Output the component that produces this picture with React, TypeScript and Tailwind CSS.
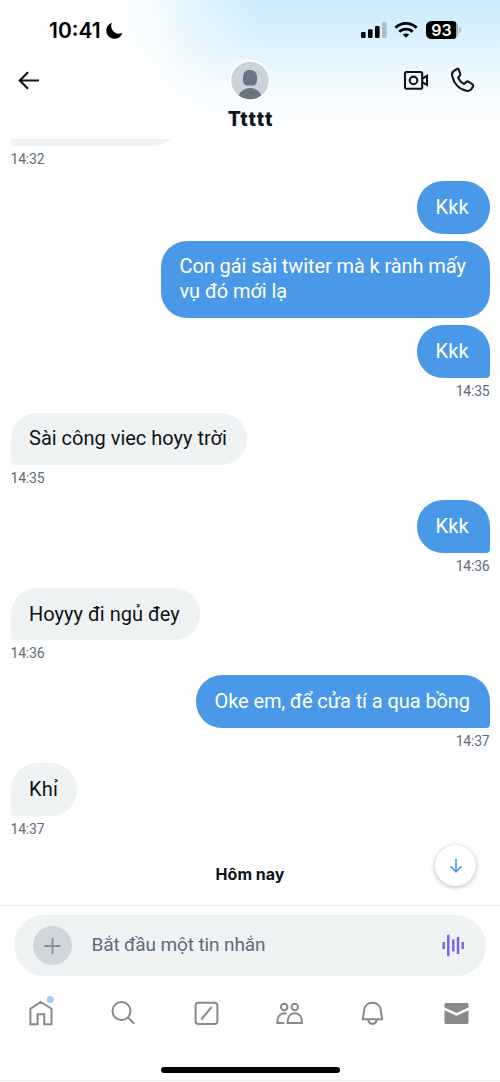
type Message = {
  side: "in" | "out";
  text: string;
  box: string;
  tail?: boolean;
  time?: string;
};

const messages: Message[] = [
  { side: "out", text: "Kkk", box: "w-[73px] tracking-[0.2px]" },
  { side: "out", text: "Con gái sài twiter mà k rành mấy\nvụ đó mới lạ", box: "w-[329px] tracking-[-0.09px]" },
  { side: "out", text: "Kkk", box: "w-[73px] tracking-[0.2px]", tail: true, time: "14:35" },
  { side: "in", text: "Sài công viec hoyy trời", box: "w-[236px]", tail: true, time: "14:35" },
  { side: "out", text: "Kkk", box: "w-[73px] tracking-[0.2px]", tail: true, time: "14:36" },
  { side: "in", text: "Hoyyy đi ngủ đey", box: "w-[189.5px]", tail: true, time: "14:36" },
  { side: "out", text: "Oke em, để cửa tí a qua bồng", box: "w-[294px] tracking-[-0.09px]", tail: true, time: "14:37" },
  { side: "in", text: "Khỉ", box: "w-[66.5px] tracking-[0.2px]", tail: true, time: "14:37" },
];

function StatusBar() {
  return (
    <div className="flex h-[60px] items-center pl-[49px] pr-[39.5px]">
      <span className="w-[52px] font-['Inter'] text-[21px] font-semibold leading-none tracking-[0px] text-black">10:41</span>
      <svg className="ml-[5px]" width="17" height="17" viewBox="0 0 17 17">
        <path d="M6 0.8A8.2 8.2 0 1 0 16.4 10.8A7.6 7.6 0 0 1 6 0.8Z" fill="#000" />
      </svg>
      <div className="ml-auto flex items-center">
        <svg width="27" height="18" viewBox="0 0 27 18">
          <rect x="1" y="11" width="4.6" height="6" rx="1.2" />
          <rect x="8" y="8.3" width="4.6" height="8.7" rx="1.2" />
          <rect x="15" y="5" width="4.6" height="12" rx="1.2" />
          <rect x="22" y="1" width="4.6" height="16" rx="1.2" fill="#a9bfd1" />
        </svg>
        <svg className="ml-[7px]" width="24" height="18" viewBox="0 0 24 18" fill="none" stroke="#000" strokeWidth="2.9">
          <path d="M1.4 6.8C7.4 .9 16.6 .9 22.6 6.8" />
          <path d="M5.3 10.8C9 7.2 15 7.2 18.7 10.8" />
          <path d="M12 16.8L8.8 13.6C10.6 12 13.4 12 15.2 13.6Z" fill="#000" stroke="none" />
        </svg>
        <div className="ml-[8px] flex h-[18px] w-[32px] items-center justify-center rounded-[5.5px] bg-gradient-to-r from-black from-93% to-[#93a9ba] to-93% font-['Inter'] text-[16px] font-semibold leading-none text-white">
          93
        </div>
        <div className="ml-[1px] h-[6px] w-[2px] rounded-r-full bg-[#a9bfd1]" />
      </div>
    </div>
  );
}

function Header() {
  return (
    <header className="h-[139px] bg-[linear-gradient(to_right,#fefefe_0%,#fefefe_20%,rgba(254,254,254,0.85)_31%,rgba(254,254,254,0.35)_41%,rgba(254,254,254,0)_52%),linear-gradient(to_bottom,#cdecfe_0px,#d7f0fe_35px,#ebf7fe_68px,#f8fcff_100px,#fefefe_139px)]">
      <StatusBar />
      <div className="grid grid-cols-[1fr_60px_1fr] items-start">
        <svg className="ml-[17px] mt-[9px]" width="24" height="24" viewBox="0 0 24 24" fill="none" stroke="#0f1419" strokeWidth="2.2">
          <path d="M22 11.5H3M11 3.2L2.8 11.5L11 19.8" />
        </svg>
        <div className="flex flex-col items-center">
          <svg className="overflow-visible" width="40" height="40" viewBox="0 0 40 40">
            <circle cx="20" cy="20.5" r="20.5" fill="#fff" />
            <circle cx="20" cy="20.5" r="18.8" fill="#cbd3da" />
            <path d="M20 10C15.8 10 13 12.6 13 17V20C13 23.8 15.2 25.6 17.6 25.6H22.4C24.8 25.6 27 23.8 27 20V17C27 12.6 24.2 10 20 10Z" fill="#687684" />
            <path d="M8.7 35.4C10.5 30.9 15 28 20 28S29.5 30.9 31.3 35.4A18.8 18.8 0 0 1 8.7 35.4Z" fill="#687684" />
          </svg>
          <span className="mt-[8px] pl-[1.5px] font-['Inter'] text-[19.5px] font-extrabold leading-[22px] tracking-[1.5px] text-[#0f1419]">Ttttt</span>
        </div>
        <div className="flex items-center justify-end pr-[25px] pt-[7px]">
          <svg width="26" height="26" viewBox="0 0 26 26" fill="none" stroke="#0f1419" strokeWidth="2.1">
            <rect x="2" y="5" width="17.2" height="16.8" rx="1.5" />
            <circle cx="10.5" cy="13.4" r="3.8" />
            <path d="M19.5 11.5L24 8.8V18L19.5 15.3" />
          </svg>
          <svg className="ml-[20px]" width="26" height="26" viewBox="0 0 26 26" fill="none" stroke="#0f1419" strokeWidth="2.1" strokeLinejoin="round">
            <path d="M8 1.9L4.4 4.3C3.2 5.2 2.8 7 3.2 9C4.8 16.4 10 22.4 17.5 23.8C19.5 24.2 21.5 23.8 22.6 21.8L24 19.4C24.4 18.6 24.2 17.9 23.5 17.4L19.4 14.7C18.7 14.3 18 14.4 17.4 14.9L15 17C12.3 15.6 10.3 13.4 9.2 10.9L11 8.2C11.4 7.6 11.4 7 11.1 6.4L9.8 2.6C9.5 1.8 8.7 1.5 8 1.9Z" />
          </svg>
        </div>
      </div>
    </header>
  );
}

function Bubble({ message }: { message: Message }) {
  const out = message.side === "out";
  return (
    <div className={out ? "flex flex-col items-end" : "flex flex-col items-start"}>
      <div
        className={[
          "rounded-[26px] py-[13.75px] whitespace-pre text-[20px] leading-[25px]",
          message.box,
          out ? "bg-[#4a99e9] pl-[19px] text-white" : "bg-[#eef2f3] pl-[18.5px] text-[#0f1419]",
          message.tail ? (out ? "rounded-br-[4px]" : "rounded-bl-[4px]") : "mb-[7px]",
        ].join(" ")}
      >
        {message.text}
      </div>
      {message.time && <Time value={message.time} />}
    </div>
  );
}

function Time({ value }: { value: string }) {
  return <div className="mb-[9px] h-[26.1px] text-[14px] leading-[26px] tracking-[-0.2px] text-[#5f6c7b]">{value}</div>;
}

function Composer() {
  return (
    <div className="border-t border-[#e8eaeb] px-[14px] pt-[9px]">
      <div className="flex h-[61px] items-center rounded-full bg-[#eef2f3] pl-[19px] pr-[21px]">
        <div className="flex size-[39px] items-center justify-center rounded-full bg-[#cfd6dc]">
          <svg width="18" height="18" viewBox="0 0 18 18" stroke="#8b8f93" strokeWidth="1.8">
            <path d="M8.5 1V17M0.5 9H16.5" />
          </svg>
        </div>
        <span className="ml-[19.5px] text-[19px] tracking-[-0.12px] text-[#5f6c7b]">Bắt đầu một tin nhắn</span>
        <svg className="ml-auto" width="24" height="24" viewBox="0 0 24 24" stroke="#7a5cf5" strokeWidth="2.4">
          <path d="M2.7 8V15M7.3 0.8V22.2M12.3 5.5V17.5M17 3V20M21.7 8V15" />
        </svg>
      </div>
    </div>
  );
}

const tabs = [
  <>
    <path d="M13.8 3L24.5 9.7V25.2H17.2V15.2H10.6V25.2H3.4V9.7Z" />
    <circle cx="23.2" cy="0.5" r="3.5" fill="#9ccaf3" stroke="none" />
  </>,
  <>
    <circle cx="11.5" cy="12" r="9" />
    <path d="M18.2 18.7L24.2 24.7" />
  </>,
  <>
    <rect x="2.6" y="3.8" width="21.8" height="21.2" rx="3" />
    <path d="M8.3 20.5L18.7 7.8" />
  </>,
  <>
    <circle cx="8.2" cy="8" r="3.2" />
    <circle cx="18.8" cy="8" r="3.2" />
    <path d="M11.5 24C11.5 18 14.4 14.3 18.8 14.3S26.1 18 26.1 24Z" />
    <path d="M8.3 24H1.2C1.2 18 4.1 14.3 8.5 14.3C9.3 14.3 10 14.4 10.7 14.6" />
  </>,
  <>
    <path d="M3.8 20.3H23.2L21.8 11.5C21.4 6.6 18 3.7 13.5 3.7S5.6 6.6 5.1 11.5Z" />
    <path d="M9.2 20.8C9.8 23.6 11.4 24.9 13.5 24.9S17.2 23.6 17.8 20.8" />
  </>,
  <g fill="#87898b" stroke="none">
    <path d="M4 4H25C25.8 4 26.5 4.7 26.5 5.5V8.4L14.5 13.9L2.5 8.4V5.5C2.5 4.7 3.2 4 4 4Z" />
    <path d="M2.5 11.2L14.5 16.8L26.5 11.2V23.5C26.5 24.4 25.8 25 25 25H4C3.2 25 2.5 24.4 2.5 23.5Z" />
  </g>,
];

function TabBar() {
  return (
    <nav className="flex h-[105px] flex-col border-b border-[#f3f3f3] pt-[23px]">
      <div className="-ml-px flex">
        {tabs.map((icon, i) => (
          <div key={i} className="flex w-[83px] justify-center">
            <svg className="overflow-visible" width="28" height="28" viewBox="0 0 28 28" fill="none" stroke="#87898b" strokeWidth="2">
              {icon}
            </svg>
          </div>
        ))}
      </div>
      <div className="mx-auto mt-[40px] h-[6px] w-[179px] rounded-full bg-black" />
    </nav>
  );
}

export default function App() {
  return (
    <div className="flex h-[1082px] w-[500px] flex-col overflow-hidden bg-[#fefefe] font-['Roboto',sans-serif]">
      <Header />
      <main className="relative h-[766px] overflow-hidden px-[10.5px]">
        {/* Message scrolled under the header */}
        <div className="-mt-[46px] h-[53px] w-[168px] rounded-[26px] rounded-bl-[4px] bg-[#eef2f3]" />
        <Time value="14:32" />
        {messages.map((message, i) => (
          <Bubble key={i} message={message} />
        ))}
        <div className="mt-[10.5px] text-center font-['Inter'] text-[16px] font-bold leading-[26px] text-[#0f1419]">Hôm nay</div>
        <button className="absolute right-[24px] top-[706px] flex size-[41px] items-center justify-center rounded-full bg-white shadow-[0_1px_5px_rgba(0,0,0,0.28)]">
          <svg width="14" height="16" viewBox="0 0 14 16" fill="none" stroke="#4a99e9" strokeWidth="1.6">
            <path d="M7 1V14M1.5 8.3L7 13.9L12.5 8.3" />
          </svg>
        </button>
      </main>
      <Composer />
      <TabBar />
    </div>
  );
}
